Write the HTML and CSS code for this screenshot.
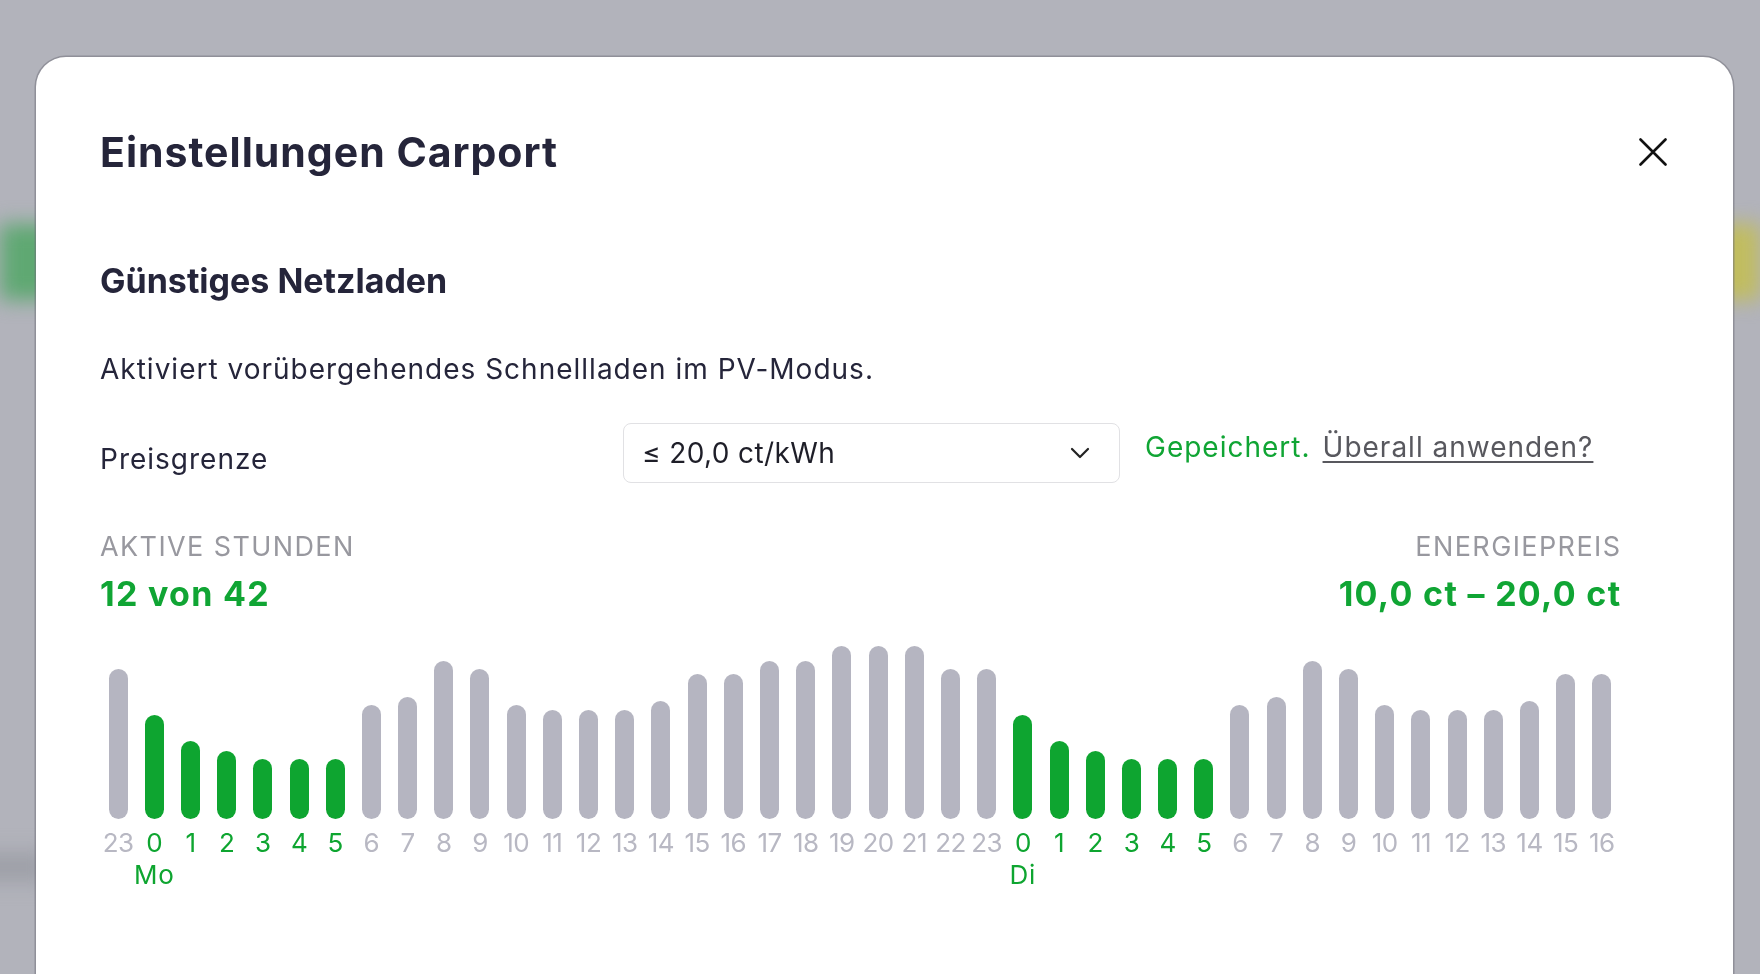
FILE: index.html
```html
<!DOCTYPE html>
<html lang="de">
<head>
<meta charset="utf-8">
<title>Einstellungen Carport</title>
<link rel="stylesheet" href="styles.css">
</head>
<body>
<div class="app" aria-hidden="true">
  <div class="app-band"></div>
  <div class="app-smudge"></div>
</div>
<div class="overlay">
  <section class="modal" role="dialog" aria-labelledby="dlg-title">
    <header class="modal-header">
      <h1 class="modal-title" id="dlg-title">Einstellungen Carport</h1>
      <button class="close" type="button" aria-label="Schließen">
        <svg width="28" height="28" viewBox="0 0 28 28"><path d="M1.5 1.5 L26.5 26.5 M26.5 1.5 L1.5 26.5" stroke="#111" stroke-width="2.6" stroke-linecap="round" fill="none"/></svg>
      </button>
    </header>
    <div class="modal-body">
      <h2 class="section-title">Günstiges Netzladen</h2>
      <p class="desc">Aktiviert vorübergehendes Schnellladen im PV-Modus.</p>
      <div class="setting-row">
        <div class="setting-label">Preisgrenze</div>
        <div class="select">
          <span class="select-value">≤ 20,0 ct/kWh</span>
          <svg class="chevron" width="20" height="12" viewBox="0 0 20 12"><path d="M2 2 L10 10 L18 2" stroke="#222" stroke-width="2.2" stroke-linecap="round" stroke-linejoin="round" fill="none"/></svg>
        </div>
        <div class="status">
          <span class="saved">Gepeichert.</span>
          <a class="apply-all" href="#">Überall anwenden?</a>
        </div>
      </div>
      <div class="stats">
        <div class="stat">
          <div class="stat-label"><span>AKTIVE STUNDEN</span></div>
          <div class="stat-value"><span>12 von 42</span></div>
        </div>
        <div class="stat stat-right">
          <div class="stat-label"><span>ENERGIEPREIS</span></div>
          <div class="stat-value"><span>10,0 ct – 20,0 ct</span></div>
        </div>
      </div>
      <div class="chart" id="chart"></div>
    </div>
  </section>
</div>
<script src="app.js"></script>
</body>
</html>
```

FILE: styles.css
```css
* { box-sizing: border-box; }
html, body { margin: 0; height: 974px; overflow: hidden; }
body {
  background: #b2b3bb;
  font-family: Inter, "Noto Sans", sans-serif;
  color: #25253a;
}
.app { height: 974px; }
.app-band {
  margin-top: 224px;
  height: 76px;
  background: linear-gradient(90deg, #5ea872 0%, #74b07a 30%, #a9b96e 70%, #c2bd5e 100%);
  filter: blur(10px);
}
.app-smudge {
  margin: 552px 0 0 -40px;
  width: 90px;
  height: 30px;
  background: #9ea0a8;
  filter: blur(10px);
}
.overlay {
  position: fixed;
  inset: 0;
  padding: 57px 27px 0 36px;
}
.modal {
  height: 1000px;
  background: #fff;
  border-radius: 30px;
  box-shadow: 0 0 0 1.5px rgba(110, 110, 120, 0.5);
  padding: 71px 66px 0 64px;
}
.modal-header {
  display: flex;
  justify-content: space-between;
  align-items: center;
  height: 48px;
}
.modal-title {
  margin: 0;
  font-size: 41px;
  line-height: 48px;
  font-weight: 700;
  letter-spacing: 1px;
}
.close {
  width: 28px;
  height: 28px;
  padding: 0;
  border: 0;
  background: none;
  display: flex;
}
.modal-body { padding-right: 47px; }
.section-title {
  margin: 85px 0 0;
  font-size: 34px;
  line-height: 40px;
  font-weight: 700;
}
.desc {
  margin: 50px 0 0;
  font-size: 28px;
  line-height: 36px;
  letter-spacing: 1px;
}
.setting-row {
  margin-top: 36px;
  display: flex;
  align-items: flex-start;
}
.setting-label {
  width: 523px;
  margin-top: 18px;
  font-size: 28px;
  line-height: 36px;
  letter-spacing: 1px;
}
.select {
  width: 497px;
  height: 60px;
  border: 1.5px solid #e1e1e4;
  border-radius: 8px;
  display: flex;
  align-items: center;
  justify-content: space-between;
  padding: 0 29px 0 18px;
  font-size: 28px;
  letter-spacing: 0.4px;
  color: #1e1e28;
}
.status {
  margin: 6px 0 0 25px;
  display: flex;
  gap: 12px;
  font-size: 28px;
  line-height: 36px;
  letter-spacing: 1px;
  white-space: nowrap;
}
.saved { color: #10a534; }
.apply-all {
  color: #58585e;
  text-decoration: underline;
  text-decoration-thickness: 1.5px;
  text-underline-offset: 4px;
}
.stats {
  margin-top: 48px;
  display: flex;
  justify-content: space-between;
}
.stat { white-space: nowrap; }
.stat-label {
  font-size: 27px;
  line-height: 32px;
  letter-spacing: 1.4px;
  color: #98989f;
}
.stat-value {
  margin-top: 9px;
  font-size: 34px;
  line-height: 44px;
  font-weight: 700;
  letter-spacing: 1.3px;
  color: #10a534;
}
.stat-right { text-align: right; }
.stat-right .stat-label span,
.stat-right .stat-value span { margin-right: -1.4px; }
.chart {
  margin-top: 23px;
  display: grid;
  grid-template-columns: repeat(42, minmax(0, 1fr));
}
.col {
  display: flex;
  flex-direction: column;
  align-items: center;
  min-width: 0;
}
.bar-slot {
  height: 180px;
  display: flex;
  align-items: flex-end;
}
.bar {
  width: 19px;
  border-radius: 10px;
  background: #b5b5c1;
}
.bar.on { background: #0ea530; }
.hour {
  margin-top: 9px;
  font-size: 26px;
  line-height: 30px;
  letter-spacing: -0.02em;
  white-space: nowrap;
  color: #b8b8c3;
}
.hour.on { color: #0ea530; }
.day {
  margin-top: 2px;
  height: 30px;
  font-size: 26px;
  line-height: 30px;
  letter-spacing: 0.8px;
  white-space: nowrap;
  color: #0ea530;
}
```

FILE: app.js
```js
(function () {
  var hours = [23,0,1,2,3,4,5,6,7,8,9,10,11,12,13,14,15,16,17,18,19,20,21,22,23,0,1,2,3,4,5,6,7,8,9,10,11,12,13,14,15,16];
  var heights = [150,104,78,68,60,60,60,114,122,158,150,114,109,109,109,118,145,145,158,158,173,173,173,150,150,104,78,68,60,60,60,114,122,158,150,114,109,109,109,118,145,145];
  var days = {1: 'Mo', 25: 'Di'};
  var chart = document.getElementById('chart');
  hours.forEach(function (h, i) {
    var on = (i >= 1 && i <= 6) || (i >= 25 && i <= 30);
    var col = document.createElement('div');
    col.className = 'col';
    var slot = document.createElement('div');
    slot.className = 'bar-slot';
    var bar = document.createElement('div');
    bar.className = 'bar' + (on ? ' on' : '');
    bar.style.height = heights[i] + 'px';
    slot.appendChild(bar);
    var lab = document.createElement('div');
    lab.className = 'hour' + (on ? ' on' : '');
    lab.textContent = h;
    var day = document.createElement('div');
    day.className = 'day';
    day.textContent = days[i] || '';
    col.appendChild(slot);
    col.appendChild(lab);
    col.appendChild(day);
    chart.appendChild(col);
  });
})();
```
